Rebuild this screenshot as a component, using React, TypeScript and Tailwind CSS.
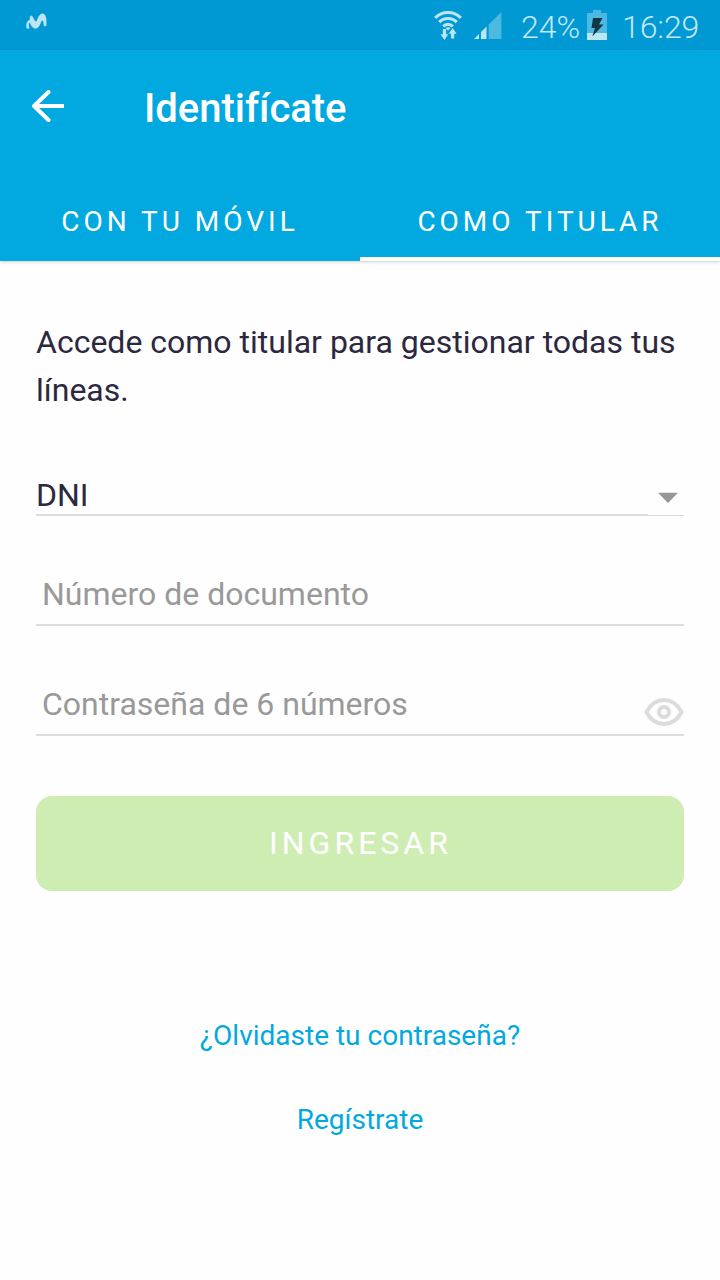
import React from 'react';

function BrandMark() {
  return (
    <svg className="ml-[26px] mt-[13px] h-4 w-[21px]" viewBox="0 0 21 16">
      <path
        d="M.8 15.2C0 11 1 7.5 3.8 7.2L4.2 3.2C5 2 6.5 3 7.2 5C8 7.2 9 8.8 10.2 8.6C11.5 8.3 12.5 .8 16.3 .8C20.3 .8 20.5 7 20.2 12.8L18.2 13C17.6 10 17.5 7.2 16.3 7.2C14.8 7.4 13.5 15.4 9.8 15.4C6.5 15.4 5 12 3.8 9.2C2.3 10 2.5 12.5 3.2 15.4Z"
        fill="#bde6f5"
        stroke="#bde6f5"
        strokeWidth=".4"
      />
    </svg>
  );
}

function WifiIcon() {
  return (
    <svg className="mt-[11px] h-[30px] w-7" viewBox="0 0 28 30" fill="none" stroke="#bde6f5" strokeWidth="3.1">
      <path d="M1.2 6.8C8.2-.2 19.8-.2 26.8 6.8" />
      <path d="M5.2 11.2C10.2 6.2 17.8 6.2 22.8 11.2" />
      <path d="M9.2 15.4C12 12.6 16 12.6 18.8 15.4" />
      <path d="M11.5 17Q14 15.4 16.5 17L14 19.4Z" fill="#bde6f5" stroke="none" />
      <path d="M10.5 18V25M18.6 20V27.5" strokeWidth="3.2" />
      <path d="M6.6 23.2H14.2L10.5 29ZM14.6 22.7H22.6L18.6 17Z" fill="#bde6f5" stroke="none" />
    </svg>
  );
}

function SignalIcon() {
  return (
    <svg className="ml-[12px] mt-[12px] h-7 w-7" viewBox="0 0 28 28">
      <path d="M0 27L5 22V27ZM7 20L12.5 14.5V27H7Z" fill="#bde6f5" />
      <path d="M14.7 12.4L27.3 0V27H14.7Z" fill="#4db8e0" />
    </svg>
  );
}

function BatteryIcon() {
  return (
    <svg className="ml-[6px] mt-[10px] h-[30px] w-5" viewBox="0 0 20 30">
      <path d="M6 0H14V3H20V23H0V3H6Z" fill="#4db8e0" />
      <path d="M0 23H20V30H0Z" fill="#bde6f5" />
      <path d="M6 8H15.5L12 14.5H16.5L5.3 26.5L8 18H4.5Z" fill="#103746" />
    </svg>
  );
}

function StatusBar() {
  return (
    <div className="flex h-[50px] items-start bg-[#0099d4]">
      <BrandMark />
      <div className="ml-auto flex items-start pr-[20px] text-[32px] font-light leading-[54px] text-[#c3e8f6]">
        <WifiIcon />
        <SignalIcon />
        <span className="ml-[19px] w-[60px] whitespace-nowrap">24%</span>
        <BatteryIcon />
        <span className="ml-[15px] w-[78px] whitespace-nowrap tracking-[-0.1px]">16:29</span>
      </div>
    </div>
  );
}

export default function App() {
  return (
    <div className="flex h-[1280px] w-[720px] flex-col overflow-hidden bg-[#fefefe] font-[Roboto,sans-serif] text-[32px] text-[#2b2840]">
      <StatusBar />
      <header className="h-[211px] shrink-0 bg-[#02a9e0] text-white shadow-[0_1px_3px_rgba(0,0,0,0.2)]">
        <div className="flex h-[112px] items-center pl-8">
          <svg className="h-8 w-8" viewBox="0 0 32 32" fill="none" stroke="white" strokeWidth="4" strokeLinecap="round" strokeLinejoin="round">
            <path d="M16.5 2L2 16L16.5 30" />
            <path d="M3 16H32" strokeLinecap="butt" />
          </svg>
          <h1 className="ml-20 pt-1.5 text-[40px] font-medium leading-[48px] tracking-[-0.03px]">Identifícate</h1>
        </div>
        <nav className="grid h-[99px] grid-cols-2 text-[28px] leading-[40px] tracking-[4px]">
          <button className="flex h-[99px] items-start justify-center pt-[40px]">CON TU MÓVIL</button>
          <button className="flex h-[99px] items-start justify-center border-b-4 border-white pt-[40px]">COMO TITULAR</button>
        </nav>
      </header>
      <main className="flex flex-col px-9 pt-[57px]">
        <p className="leading-[48px]">Accede como titular para gestionar todas tus líneas.</p>
        <button className="mt-[57px] flex h-[45px] text-left leading-[48px]">
          <span className="h-[45px] grow border-b-2 border-[#dcdcdc]">DNI</span>
          <span className="flex h-[45px] w-9 justify-center border-b border-[#dcdcdc] pt-[21px]">
            <svg className="ml-1 h-3 w-5" viewBox="0 0 20 12">
              <path d="M0 .8H20L10 11Z" fill="#979797" />
            </svg>
          </span>
        </button>
        <input
          aria-label="Número de documento"
          placeholder="Número de documento"
          className="mt-[54px] h-[56px] border-b-2 border-[#dcdcdc] bg-transparent pb-[6px] pl-1.5 outline-none placeholder:text-[#999999]"
        />
        <div className="mt-[54px] flex h-[56px] border-b-2 border-[#dcdcdc]">
          <input
            type="password"
            aria-label="Contraseña de 6 números"
            placeholder="Contraseña de 6 números"
            className="min-w-0 grow bg-transparent pb-[6px] pl-1.5 outline-none placeholder:text-[#999999]"
          />
          <svg className="mt-[18px] h-7 w-10" viewBox="0 0 40 28" fill="none" stroke="#dcdcdc" strokeWidth="4">
            <path d="M2.3 14C11-2 29-2 37.7 14C29 30 11 30 2.3 14Z" strokeLinejoin="round" />
            <circle cx="20" cy="14" r="5" />
          </svg>
        </div>
        <button className="mt-[60px] h-[95px] rounded-[16px] bg-[#ceedb3] pl-px leading-[95px] tracking-[4px] text-white">INGRESAR</button>
        <a className="mt-[125px] text-center text-[28px] leading-[40px] text-[#02a9e0]">¿Olvidaste tu contraseña?</a>
        <a className="mt-[44px] text-center text-[28px] leading-[40px] text-[#02a9e0]">Regístrate</a>
      </main>
    </div>
  );
}
